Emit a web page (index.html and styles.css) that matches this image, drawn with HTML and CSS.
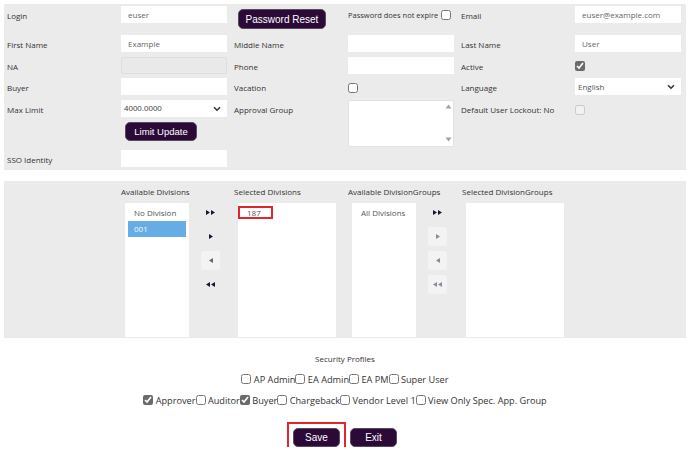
FILE: index.html
```html
<!DOCTYPE html>
<html>
<head>
<meta charset="utf-8">
<title>User</title>
<link rel="stylesheet" href="styles.css">
</head>
<body>
<div class="page">
  <section class="panel form-grid">
    <div class="lbl">Login</div>
    <div class="cell"><input class="txt" value="euser"></div>
    <div class="cell"><button class="btn btn-reset">Password Reset</button></div>
    <div class="cell pwd"><span>Password does not expire</span><input type="checkbox" class="cb cb-pwd"></div>
    <div class="lbl">Email</div>
    <div class="cell"><input class="txt" value="euser@example.com"></div>

    <div class="lbl">First Name</div>
    <div class="cell"><input class="txt" value="Example"></div>
    <div class="lbl">Middle Name</div>
    <div class="cell"><input class="txt" value=""></div>
    <div class="lbl">Last Name</div>
    <div class="cell"><input class="txt" value="User"></div>

    <div class="lbl">NA</div>
    <div class="cell"><input class="txt txt-disabled" value="" disabled></div>
    <div class="lbl">Phone</div>
    <div class="cell"><input class="txt" value=""></div>
    <div class="lbl">Active</div>
    <div class="cell"><input type="checkbox" class="cb cb-active" checked></div>

    <div class="lbl">Buyer</div>
    <div class="cell"><input class="txt" value=""></div>
    <div class="lbl">Vacation</div>
    <div class="cell"><input type="checkbox" class="cb cb-vac"></div>
    <div class="lbl">Language</div>
    <div class="cell"><div class="select"><span>English</span><svg class="chev" width="8" height="6" viewBox="0 0 8 6"><path d="M1 1.2 L4 4.2 L7 1.2" fill="none" stroke="#333" stroke-width="1.6"/></svg></div></div>

    <div class="lbl">Max Limit</div>
    <div class="cell"><div class="select sel-arial"><span>4000.0000</span><svg class="chev" width="8" height="6" viewBox="0 0 8 6"><path d="M1 1.2 L4 4.2 L7 1.2" fill="none" stroke="#333" stroke-width="1.6"/></svg></div></div>
    <div class="lbl">Approval Group</div>
    <div class="cell span2">
      <div class="multi">
        <div class="scroll">
          <svg width="7" height="5" viewBox="0 0 7 5"><path d="M0.5 4.5 L3.5 0.5 L6.5 4.5 Z" fill="#a3a3a3"/></svg>
          <svg width="7" height="5" viewBox="0 0 7 5"><path d="M0.5 0.5 L3.5 4.5 L6.5 0.5 Z" fill="#a3a3a3"/></svg>
        </div>
      </div>
    </div>
    <div class="lbl">Default User Lockout: No</div>
    <div class="cell"><input type="checkbox" class="cb cb-lock" disabled></div>

    <div class="lbl"></div>
    <div class="cell"><button class="btn btn-limit">Limit Update</button></div>
    <div class="lbl"></div>
    <div class="lbl"></div>
    <div class="cell"></div>

    <div class="lbl">SSO Identity</div>
    <div class="cell"><input class="txt" value=""></div>
  </section>

  <section class="panel divisions">
    <div class="dcol">
      <div class="dlbl">Available Divisions</div>
      <div class="drow">
        <div class="list list-narrow">
          <div class="item">No Division</div>
          <div class="item item-sel">001</div>
        </div>
        <div class="arrows">
          <div class="arr"><svg width="9" height="5" viewBox="0 0 9 5"><path d="M0 0 L4 2.5 L0 5 Z M5 0 L9 2.5 L5 5 Z" fill="#1c1430"/></svg></div>
          <div class="arr"><svg width="4" height="5" viewBox="0 0 4 5"><path d="M0 0 L4 2.5 L0 5 Z" fill="#1c1430"/></svg></div>
          <div class="arr arr-bg"><svg width="4" height="5" viewBox="0 0 4 5"><path d="M4 0 L0 2.5 L4 5 Z" fill="#6a6478"/></svg></div>
          <div class="arr"><svg width="9" height="5" viewBox="0 0 9 5"><path d="M4 0 L0 2.5 L4 5 Z M9 0 L5 2.5 L9 5 Z" fill="#1c1430"/></svg></div>
        </div>
      </div>
    </div>
    <div class="dcol">
      <div class="dlbl">Selected Divisions</div>
      <div class="drow">
        <div class="list list-wide">
          <div class="item item-mark">187</div>
        </div>
      </div>
    </div>
    <div class="dcol">
      <div class="dlbl">Available DivisionGroups</div>
      <div class="drow">
        <div class="list list-narrow">
          <div class="item">All Divisions</div>
        </div>
        <div class="arrows">
          <div class="arr"><svg width="9" height="5" viewBox="0 0 9 5"><path d="M0 0 L4 2.5 L0 5 Z M5 0 L9 2.5 L5 5 Z" fill="#1c1430"/></svg></div>
          <div class="arr arr-bg"><svg width="4" height="5" viewBox="0 0 4 5"><path d="M0 0 L4 2.5 L0 5 Z" fill="#8f8a99"/></svg></div>
          <div class="arr arr-bg"><svg width="4" height="5" viewBox="0 0 4 5"><path d="M4 0 L0 2.5 L4 5 Z" fill="#8f8a99"/></svg></div>
          <div class="arr arr-bg"><svg width="9" height="5" viewBox="0 0 9 5"><path d="M4 0 L0 2.5 L4 5 Z M9 0 L5 2.5 L9 5 Z" fill="#8f8a99"/></svg></div>
        </div>
      </div>
    </div>
    <div class="dcol">
      <div class="dlbl">Selected DivisionGroups</div>
      <div class="drow">
        <div class="list list-wide"></div>
      </div>
    </div>
  </section>

  <section class="security">
    <div class="sec-title">Security Profiles</div>
    <div class="cb-row"><input type="checkbox" class="pcb"> AP Admin<input type="checkbox" class="pcb"> EA Admin<input type="checkbox" class="pcb"> EA PM<input type="checkbox" class="pcb"> Super User</div>
    <div class="cb-row"><input type="checkbox" class="pcb" checked> Approver<input type="checkbox" class="pcb"> Auditor<input type="checkbox" class="pcb" checked> Buyer<input type="checkbox" class="pcb"> Chargeback<input type="checkbox" class="pcb"> Vendor Level 1<input type="checkbox" class="pcb"> View Only Spec. App. Group</div>
    <div class="actions">
      <div class="save-wrap"><button class="btn btn-act">Save</button></div>
      <button class="btn btn-act">Exit</button>
    </div>
  </section>
</div>
</body>
</html>
```

FILE: styles.css
```css
* { box-sizing: border-box; }
html, body { margin: 0; padding: 0; background: #fff; }
body {
  font-family: "Open Sans", "Noto Sans", "DejaVu Sans", sans-serif;
  font-size: 8px;
  color: #333;
}
.page { padding: 4px 2px 0 4px; }

.panel { background: #ebebeb; }

/* top form */
.form-grid {
  display: grid;
  grid-template-columns: 114px 113px 114px 113px 114px 106px;
  grid-template-rows: 29px 22px 21px 22px 22px 28px 20px;
  padding: 2px 0 0 3px;
  height: 166px;
}
.lbl { line-height: 19px; white-space: nowrap; color: #333; }
.cell { position: relative; }
.span2 { grid-row: span 2; }

.txt {
  display: block;
  width: 106px;
  height: 17px;
  border: none;
  background: #fff;
  padding: 0 0 0 7px;
  margin: 0;
  font-family: "Open Sans", "Noto Sans", sans-serif;
  font-size: 8px;
  color: #666;
  outline: none;
}
.txt-disabled { background: #e9e9e9; border: 1px solid #dedede; border-radius: 2px; }

.select {
  width: 106px;
  height: 17px;
  background: #fff;
  display: flex;
  align-items: center;
  justify-content: space-between;
  padding: 0 6px 0 3px;
  color: #555;
  font-size: 8px;
}
.sel-arial { font-family: "Liberation Sans", Arial, sans-serif; color: #444; }

.multi {
  width: 106px;
  height: 47px;
  background: #fff;
  border: 1px solid #e2e2e2;
  border-radius: 2px;
  display: flex;
  justify-content: flex-end;
}
.scroll {
  width: 10px;
  display: flex;
  flex-direction: column;
  justify-content: space-between;
  align-items: center;
  padding: 3px 0 4px;
}
.scroll svg { display: block; }

.cb {
  width: 10px;
  height: 10px;
  margin: 0;
  display: block;
  accent-color: #6a6a6a;
}
.cb-active { margin-top: 4px; }
.cb-vac { margin-top: 5px; }
.cb-lock { margin-top: 5px; }
.pwd { display: flex; align-items: flex-start; white-space: nowrap; }
.pwd span { font-size: 7.5px; line-height: 19px; margin-right: 3px; }
.cb-pwd { margin-top: 4px; }

.btn {
  background: #2b0a37;
  color: #fff;
  border: 1px solid #5a4a60;
  border-radius: 5px;
  font-family: "Liberation Sans", Arial, sans-serif;
  font-size: 9.5px;
  padding: 0;
  cursor: pointer;
}
.btn-reset { width: 88px; height: 20px; margin: 3px 0 0 4px; display: block; font-size: 10px; }
.btn-limit { width: 72px; height: 19px; margin: 0 0 0 4px; display: block; }

/* divisions */
.divisions {
  margin-top: 11px;
  height: 157px;
  padding: 5px 0 0 117px;
  display: grid;
  grid-template-columns: 113px 114px 114px 113px;
}
.dcol { display: flex; flex-direction: column; }
.dlbl { line-height: 12px; height: 12px; white-space: nowrap; margin-bottom: 5px; }
.drow { display: flex; align-items: flex-start; padding-left: 4px; }
.list { background: #fff; height: 134px; padding: 2px 3px; }
.list-narrow { width: 64px; }
.list-wide { width: 98px; }
.item { height: 16px; line-height: 16px; padding-left: 6px; color: #555; font-size: 8px; white-space: nowrap; }
.item-sel { background: #66ade6; color: #f4f8fc; }
.item-mark { width: 35px; height: 13px; line-height: 9px; margin: 1px 0 0 -3px; border: 2px solid #e3262c; padding-left: 7px; }
.arrows { margin-left: 12px; display: flex; flex-direction: column; gap: 5px; }
.arr { width: 19px; height: 19px; display: flex; align-items: center; justify-content: center; border-radius: 2px; }
.arr-bg { background: #f3f3f3; }

/* security */
.security { text-align: center; margin-top: 15px; }
.sec-title { line-height: 12px; font-size: 8px; color: #333; }
.cb-row { line-height: 21px; font-size: 9.2px; color: #333; white-space: nowrap; }
.sec-title + .cb-row { margin-top: 4px; }
.pcb {
  width: 10px;
  height: 10px;
  margin: 0;
  vertical-align: -1px;
  accent-color: #6a6a6a;
}
.actions { margin-top: 17px; display: flex; justify-content: center; gap: 10px; }
.btn-act { width: 47px; height: 19px; font-size: 10px; display: block; }
.save-wrap { border: 2px solid #e3262c; padding: 4px; margin: -6px; }
```
